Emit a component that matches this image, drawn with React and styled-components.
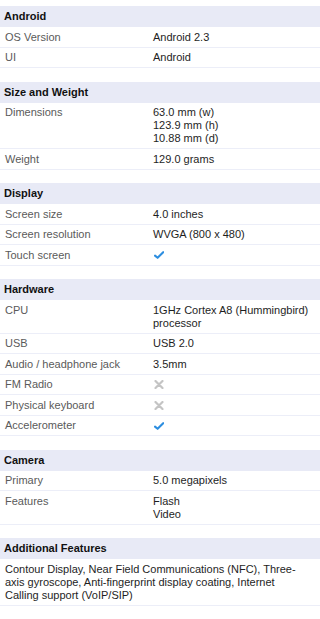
import React from "react";
import styled, { createGlobalStyle } from "styled-components";

const Global = createGlobalStyle`
  html, body { margin: 0; padding: 0; background: #fff; }
  body { font-family: "Liberation Sans", Arial, Helvetica, sans-serif; font-size: 11px; }
`;

const Page = styled.div`
  width: 320px;
  padding-top: 6px;
  display: flex;
  flex-direction: column;
  gap: 13.5px;
`;

const Section = styled.section`
  display: flex;
  flex-direction: column;
`;

const Header = styled.div`
  background: #e8eaf6;
  color: #111;
  font-weight: bold;
  font-size: 11px;
  line-height: 13px;
  padding: 4px 4px 4px;
`;

const Row = styled.div`
  display: grid;
  grid-template-columns: 148px 1fr;
  padding: 3.5px 5px 3px;
  line-height: 13px;
  border-bottom: 1px solid #eceef8;
`;

const Label = styled.div`
  color: #5a5a5a;
`;

const Value = styled.div`
  color: #1e1e1e;
`;

const Para = styled.div`
  padding: 4px 14px 3px 5px;
  line-height: 13px;
  color: #1e1e1e;
  border-bottom: 1px solid #eceef8;
`;

const IconWrap = styled.div`
  display: flex;
  align-items: center;
  height: 13px;
  padding-left: 1px;
`;

const Check = () => (
  <IconWrap>
    <svg width="10" height="8" viewBox="0 0 10 8">
      <path d="M1 4.6 L3.6 6.8 L9.2 1.2" fill="none" stroke="#2d8ee0" strokeWidth="2.1" strokeLinecap="round" strokeLinejoin="round" />
    </svg>
  </IconWrap>
);

const Cross = () => (
  <IconWrap>
    <svg width="10" height="9" viewBox="0 0 10 9">
      <path d="M1.5 1 L8.5 8 M8.5 1 L1.5 8" fill="none" stroke="#c4c4c4" strokeWidth="2.2" strokeLinecap="round" />
    </svg>
  </IconWrap>
);

const sections = [
  {
    title: "Android",
    rows: [
      ["OS Version", "Android 2.3"],
      ["UI", "Android"],
    ],
  },
  {
    title: "Size and Weight",
    rows: [
      ["Dimensions", ["63.0 mm (w)", "123.9 mm (h)", "10.88 mm (d)"]],
      ["Weight", "129.0 grams"],
    ],
  },
  {
    title: "Display",
    rows: [
      ["Screen size", "4.0 inches"],
      ["Screen resolution", "WVGA (800 x 480)"],
      ["Touch screen", "check"],
    ],
  },
  {
    title: "Hardware",
    rows: [
      ["CPU", "1GHz Cortex A8 (Hummingbird) processor"],
      ["USB", "USB 2.0"],
      ["Audio / headphone jack", "3.5mm"],
      ["FM Radio", "cross"],
      ["Physical keyboard", "cross"],
      ["Accelerometer", "check"],
    ],
  },
  {
    title: "Camera",
    rows: [
      ["Primary", "5.0 megapixels"],
      ["Features", ["Flash", "Video"]],
    ],
  },
];

const renderValue = (v) => {
  if (v === "check") return <Check />;
  if (v === "cross") return <Cross />;
  if (Array.isArray(v)) return v.map((l) => <div key={l}>{l}</div>);
  return v;
};

export default function App() {
  return (
    <>
      <Global />
      <Page>
        {sections.map((s) => (
          <Section key={s.title}>
            <Header>{s.title}</Header>
            {s.rows.map(([l, v]) => (
              <Row key={l}>
                <Label>{l}</Label>
                <Value>{renderValue(v)}</Value>
              </Row>
            ))}
          </Section>
        ))}
        <Section>
          <Header>Additional Features</Header>
          <Para>
            Contour Display, Near Field Communications (NFC), Three-axis gyroscope, Anti-fingerprint display coating, Internet Calling support (VoIP/SIP)
          </Para>
        </Section>
      </Page>
    </>
  );
}
